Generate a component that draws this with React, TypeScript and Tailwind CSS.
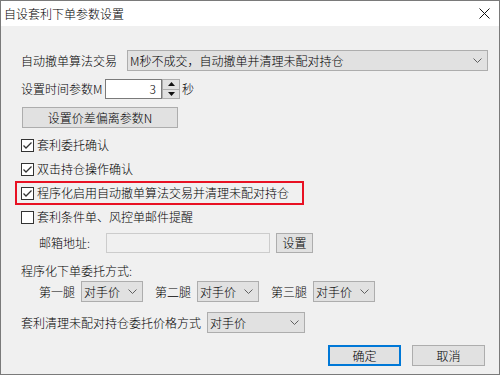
import React from "react";

const font = { fontFamily: '"Noto Sans CJK SC", "Microsoft YaHei", sans-serif' };

function Chevron() {
  return (
    <svg width="9" height="5" viewBox="0 0 9 5" className="shrink-0">
      <path d="M0.5 0.5 L4.5 4.5 L8.5 0.5" fill="none" stroke="#606060" strokeWidth="1" />
    </svg>
  );
}

function Combo({ text, w }: { text: string; w: string }) {
  return (
    <div className={`${w} h-full flex items-center justify-between border border-[#adadad] bg-[#e1e1e1] pl-[2px] pr-[5px]`}>
      <span className="leading-none">{text}</span>
      <Chevron />
    </div>
  );
}

function Check({ checked }: { checked: boolean }) {
  return (
    <div className="w-[13px] h-[13px] border border-[#333333] bg-white flex items-center justify-center shrink-0">
      {checked && (
        <svg width="11" height="11" viewBox="0 0 11 11">
          <path d="M1.5 5.5 L4 8 L9.5 2.5" fill="none" stroke="#333333" strokeWidth="1.3" />
        </svg>
      )}
    </div>
  );
}

function CheckRow({ checked, label }: { checked: boolean; label: string }) {
  return (
    <div className="h-[24px] flex items-center gap-[3px]">
      <Check checked={checked} />
      <span>{label}</span>
    </div>
  );
}

function Btn({ text, w, primary }: { text: string; w: string; primary?: boolean }) {
  return (
    <div
      className={`${w} h-full flex items-center justify-center bg-[#e1e1e1] ${
        primary ? "border-2 border-[#0078d7]" : "border border-[#adadad]"
      }`}
    >
      {text}
    </div>
  );
}

export default function App() {
  return (
    <div
      className="w-[500px] h-[375px] border border-[#7a7a7a] bg-[#f0f0f0] flex flex-col text-[12px] text-black leading-none font-light"
      style={font}
    >
      <div className="h-[25px] bg-white flex items-center justify-between pl-[3px] pr-[9px]">
        <span>自设套利下单参数设置</span>
        <svg width="11" height="11" viewBox="0 0 11 11">
          <path d="M0.5 0.5 L10.5 10.5 M10.5 0.5 L0.5 10.5" stroke="#111" strokeWidth="1" />
        </svg>
      </div>

      <div className="flex flex-col pl-[20px]">
        <div className="mt-[24px] h-[21px] flex items-center gap-[10px]">
          <span>自动撤单算法交易</span>
          <Combo text="M秒不成交，自动撤单并清理未配对持仓" w="w-[361px]" />
        </div>

        <div className="mt-[8px] h-[20px] flex items-center">
          <span className="w-[84px]">设置时间参数M</span>
          <div className="w-[57px] h-full border border-[#7a7a7a] bg-white flex items-center justify-end pr-[5px]">
            3
          </div>
          <div className="w-[18px] h-full border border-[#adadad] bg-[#e1e1e1] flex flex-col">
            <div className="flex-1 flex items-center justify-center border-b border-[#adadad]">
              <svg width="7" height="4" viewBox="0 0 7 4">
                <path d="M0 4 L3.5 0 L7 4 Z" fill="#111" />
              </svg>
            </div>
            <div className="flex-1 flex items-center justify-center">
              <svg width="7" height="4" viewBox="0 0 7 4">
                <path d="M0 0 L3.5 4 L7 0 Z" fill="#111" />
              </svg>
            </div>
          </div>
          <span className="ml-[2px]">秒</span>
        </div>

        <div className="mt-[8px] h-[21px] flex items-center">
          <div className="ml-[1px] h-full">
            <Btn text="设置价差偏离参数N" w="w-[156px]" />
          </div>
        </div>

        <div className="mt-[5px] flex flex-col">
          <CheckRow checked label="套利委托确认" />
          <CheckRow checked label="双击持仓操作确认" />
          <div className="ml-[-6px] w-[289px] h-[24px] border-2 border-[#e81123] flex items-center pl-[4px] gap-[3px]">
            <Check checked />
            <span>程序化启用自动撤单算法交易并清理未配对持仓</span>
          </div>
          <CheckRow checked={false} label="套利条件单、风控单邮件提醒" />
        </div>

        <div className="mt-[4px] h-[20px] flex items-center">
          <span className="ml-[18px] w-[67px]">邮箱地址:</span>
          <div className="w-[164px] h-full border border-[#cccccc] bg-[#f0f0f0]" />
          <div className="ml-[6px] h-full">
            <Btn text="设置" w="w-[37px]" />
          </div>
        </div>

        <div className="mt-[8px] h-[20px] flex items-center">
          <span>程序化下单委托方式:</span>
        </div>

        <div className="mt-[0px] h-[21px] flex items-center">
          <span className="ml-[18px]">第一腿</span>
          <div className="ml-[6px] h-full">
            <Combo text="对手价" w="w-[62px]" />
          </div>
          <span className="ml-[12px]">第二腿</span>
          <div className="ml-[6px] h-full">
            <Combo text="对手价" w="w-[62px]" />
          </div>
          <span className="ml-[12px]">第三腿</span>
          <div className="ml-[6px] h-full">
            <Combo text="对手价" w="w-[62px]" />
          </div>
        </div>

        <div className="mt-[10px] h-[21px] flex items-center">
          <span>套利清理未配对持仓委托价格方式</span>
          <div className="ml-[6px] h-full">
            <Combo text="对手价" w="w-[98px]" />
          </div>
        </div>

        <div className="mt-[12px] h-[21px] flex items-center justify-end pr-[14px] gap-[11px]">
          <Btn text="确定" w="w-[73px]" primary />
          <Btn text="取消" w="w-[73px]" />
        </div>
      </div>
    </div>
  );
}
